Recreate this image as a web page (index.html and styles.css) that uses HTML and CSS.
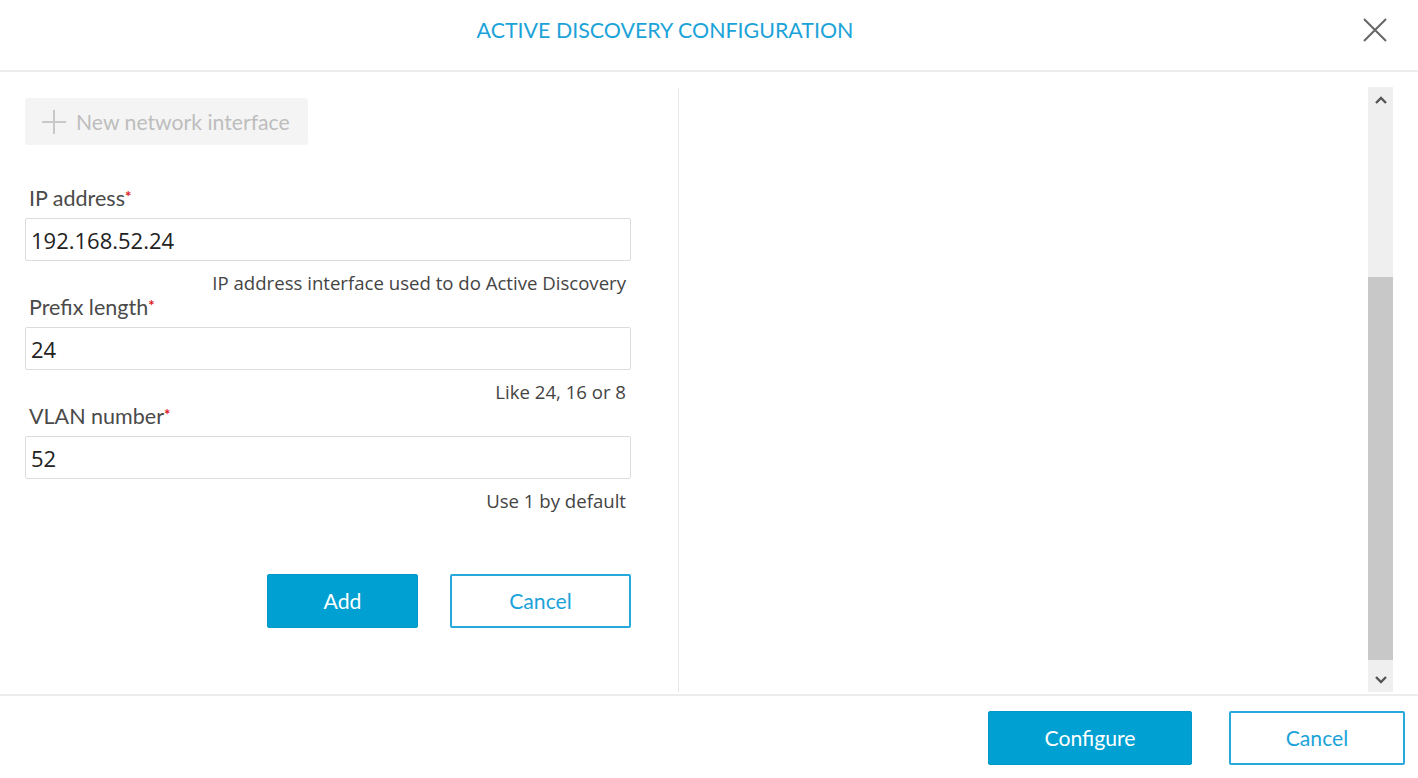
FILE: index.html
```html
<!DOCTYPE html>
<html>
<head>
<meta charset="utf-8">
<link rel="stylesheet" href="styles.css">
</head>
<body>
<div class="dialog">
  <header class="header">
    <h1 class="title">ACTIVE DISCOVERY CONFIGURATION</h1>
    <button class="close" aria-label="Close">
      <svg width="24" height="24" viewBox="0 0 24 24"><path d="M1 1 L23 23 M23 1 L1 23" stroke="#666" stroke-width="2" fill="none"/></svg>
    </button>
  </header>
  <main class="body">
    <section class="left">
      <button class="new-btn">
        <svg width="26" height="26" viewBox="0 0 26 26"><path d="M13 1 V25 M1 13 H25" stroke="#c8c8c8" stroke-width="2" fill="none"/></svg>
        <span>New network interface</span>
      </button>
      <div class="field field-first">
        <label class="label">IP address<span class="req">*</span></label>
        <div class="input">192.168.52.24</div>
        <div class="hint">IP address interface used to do Active Discovery</div>
      </div>
      <div class="field">
        <label class="label">Prefix length<span class="req">*</span></label>
        <div class="input">24</div>
        <div class="hint">Like 24, 16 or 8</div>
      </div>
      <div class="field">
        <label class="label">VLAN number<span class="req">*</span></label>
        <div class="input">52</div>
        <div class="hint">Use 1 by default</div>
      </div>
      <div class="actions">
        <button class="btn btn-primary btn-add">Add</button>
        <button class="btn btn-outline btn-cancel-small">Cancel</button>
      </div>
    </section>
    <section class="right">
      <div class="scrollbar">
        <div class="arrow">
          <svg width="14" height="10" viewBox="0 0 14 10"><path d="M2 8 L7 3 L12 8" stroke="#555" stroke-width="2.4" fill="none"/></svg>
        </div>
        <div class="track"></div>
        <div class="thumb"></div>
        <div class="arrow arrow-down">
          <svg width="14" height="10" viewBox="0 0 14 10"><path d="M2 2 L7 7 L12 2" stroke="#555" stroke-width="2.4" fill="none"/></svg>
        </div>
      </div>
    </section>
  </main>
  <footer class="footer">
    <button class="btn btn-primary btn-configure">Configure</button>
    <button class="btn btn-outline btn-cancel">Cancel</button>
  </footer>
</div>
</body>
</html>
```
FILE: styles.css
```css
* { box-sizing: border-box; }
html, body { margin: 0; padding: 0; background: #fff; }
body { font-family: Lato, "Open Sans", sans-serif; width: 1418px; height: 778px; overflow: hidden; }
.dialog { display: flex; flex-direction: column; height: 778px; }
.header {
  height: 72px;
  border-bottom: 2px solid #ececec;
  display: flex;
  align-items: center;
  justify-content: center;
  position: relative;
  padding-right: 88px;
}
.title {
  margin: 0;
  padding-bottom: 10px;
  font-size: 21.4px;
  font-weight: 400;
  color: #1ba3d9;
  letter-spacing: 0;
}
.close {
  position: absolute;
  right: 31px;
  top: 18px;
  border: 0;
  background: none;
  padding: 0;
  width: 24px;
  height: 24px;
}
.body { display: flex; height: 622px; }
.left {
  width: 679px;
  margin-top: 16px;
  margin-bottom: 2px;
  border-right: 1px solid #e6e6e6;
  padding: 10px 0 0 25px;
}
.new-btn {
  display: flex;
  align-items: center;
  gap: 9px;
  height: 47px;
  width: 283px;
  border: 0;
  border-radius: 3px;
  background: #f4f4f4;
  padding: 0 0 0 16px;
  font-family: Lato, sans-serif;
  font-size: 21.2px;
  color: #bdbdbd;
}
.field { width: 606px; display: flex; flex-direction: column; }
.field-first { margin-top: 41px; }
.label {
  font-size: 21.5px;
  color: #4a4a4a;
  padding-left: 4px;
  line-height: 24px;
  height: 24px;
}
.req { color: #e0161d; font-size: 15px; font-weight: 700; vertical-align: top; position: relative; top: -2px; }
.input {
  margin-top: 8px;
  height: 43px;
  border: 1px solid #dcdcdc;
  border-radius: 2px;
  font-family: "Open Sans", sans-serif;
  font-size: 22px;
  color: #222;
  padding: 0 0 0 5px;
  display: flex;
  align-items: center;
}
.hint {
  text-align: right;
  padding-right: 5px;
  font-family: "Open Sans", sans-serif;
  font-size: 18.6px;
  color: #444;
  height: 34px;
  line-height: 22px;
  padding-top: 11px;
}
.actions {
  width: 606px;
  display: flex;
  justify-content: flex-end;
  gap: 32px;
  margin-top: 61px;
}
.btn {
  font-family: Lato, sans-serif;
  font-size: 21.2px;
  height: 54px;
  border-radius: 2px;
  cursor: pointer;
}
.btn-primary { background: #00a1d2; border: 1px solid #0098c8; color: #fff; }
.btn-outline { background: #fff; border: 2px solid #28a9dc; color: #1ba3d9; }
.btn-add { width: 151px; }
.btn-cancel-small { width: 181px; }
.right { flex: 1; display: flex; justify-content: flex-end; padding-right: 25px; padding-top: 15px; padding-bottom: 2px; }
.scrollbar {
  width: 25px;
  display: flex;
  flex-direction: column;
  background: #efefef;
}
.arrow { height: 26px; display: flex; align-items: center; justify-content: center; }
.track { height: 164px; }
.thumb { height: 383px; background: #c8c8c8; }
.arrow-down { flex: 1; padding-top: 8px; }
.footer {
  height: 84px;
  border-top: 2px solid #ececec;
  display: flex;
  justify-content: flex-end;
  align-items: flex-start;
  padding: 15px 13px 0 0;
  gap: 37px;
}
.btn-configure { width: 204px; }
.btn-cancel { width: 176px; }
```
